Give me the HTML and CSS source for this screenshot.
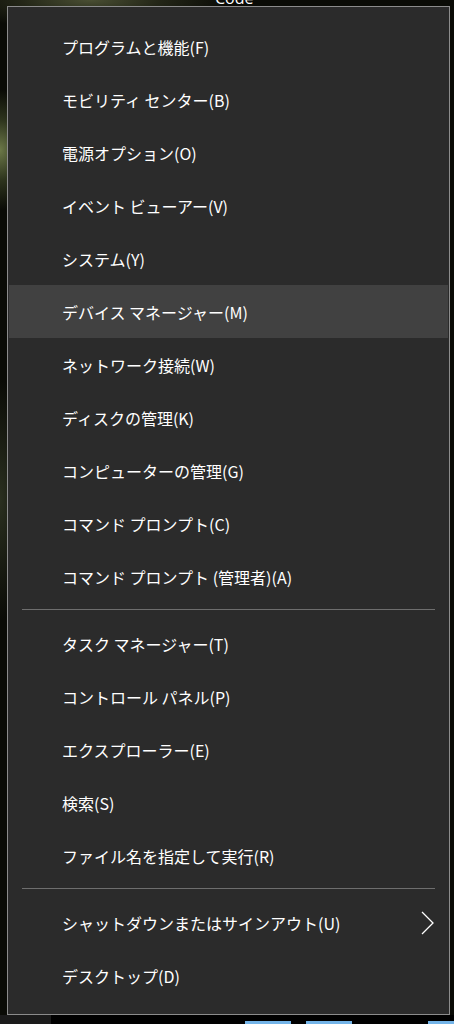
FILE: index.html
```html
<!DOCTYPE html>
<html lang="ja">
<head>
<meta charset="utf-8">
<title>Win+X menu</title>
<link rel="stylesheet" href="styles.css">
</head>
<body>
<div class="screen">
  <div class="top-strip"><span class="desk-label">Code</span></div>
  <div class="middle">
    <div class="menu">
      <div class="item">プログラムと機能(F)</div>
      <div class="item">モビリティ センター(B)</div>
      <div class="item">電源オプション(O)</div>
      <div class="item">イベント ビューアー(V)</div>
      <div class="item">システム(Y)</div>
      <div class="item hover">デバイス マネージャー(M)</div>
      <div class="item">ネットワーク接続(W)</div>
      <div class="item">ディスクの管理(K)</div>
      <div class="item">コンピューターの管理(G)</div>
      <div class="item">コマンド プロンプト(C)</div>
      <div class="item">コマンド プロンプト (管理者)(A)</div>
      <div class="sep"></div>
      <div class="item">タスク マネージャー(T)</div>
      <div class="item">コントロール パネル(P)</div>
      <div class="item">エクスプローラー(E)</div>
      <div class="item">検索(S)</div>
      <div class="item">ファイル名を指定して実行(R)</div>
      <div class="sep"></div>
      <div class="item sub"><span>シャットダウンまたはサインアウト(U)</span>
        <svg class="chev" width="13" height="24" viewBox="0 0 13 24"><path d="M1 1 L12 12 L1 23" fill="none" stroke="#ffffff" stroke-width="1.3"/></svg>
      </div>
      <div class="item">デスクトップ(D)</div>
    </div>
  </div>
  <div class="taskbar">
    <div class="tb-left"></div>
    <div class="tb-btn b1"></div>
    <div class="tb-btn b2"></div>
    <div class="tb-btn b3"></div>
  </div>
</div>
</body>
</html>
```

FILE: styles.css
```css
html, body {
  margin: 0;
  padding: 0;
}
body {
  width: 454px;
  height: 1024px;
  overflow: hidden;
  background-color: #0a0b06;
  background-image:
    radial-gradient(ellipse 40px 60px at 0px 150px, #6c7848 0%, rgba(70,80,45,0.6) 50%, rgba(0,0,0,0) 100%),
    radial-gradient(ellipse 140px 30px at 90px 0px, #4a4f33 0%, rgba(60,64,40,0.5) 50%, rgba(0,0,0,0) 100%),
    radial-gradient(ellipse 30px 120px at 0px 500px, #2b3020 0%, rgba(0,0,0,0) 100%);
  font-family: "Noto Sans CJK JP", "Noto Sans", sans-serif;
}
.screen {
  display: flex;
  flex-direction: column;
}
.top-strip {
  height: 6px;
  overflow: hidden;
  padding-left: 215px;
}
.desk-label {
  display: block;
  margin-top: -10px;
  font-family: "Open Sans", "Noto Sans", sans-serif;
  font-size: 16px;
  line-height: 16px;
  color: #ffffff;
}
.middle {
  display: flex;
  padding-left: 7px;
}
.menu {
  width: 441px;
  height: 1007px;
  box-sizing: content-box;
  border: 1px solid #8c8c8c;
  background: #2b2b2b;
  padding: 13px 0 0 0;
  box-sizing: border-box;
  height: 1009px;
  width: 443px;
  display: flex;
  flex-direction: column;
}
.item {
  height: 53px;
  flex: none;
  display: flex;
  align-items: center;
  margin: 0 1px;
  padding-left: 53px;
  padding-right: 14px;
  color: #ffffff;
  font-size: 16px;
  white-space: nowrap;
}
.item.hover {
  background: #414141;
}
.item.sub {
  justify-content: space-between;
}
.chev {
  display: block;
}
.sep {
  flex: none;
  height: 1px;
  background: #6e6e6e;
  margin: 6px 14px 7px 14px;
}
.taskbar {
  height: 9px;
  display: flex;
  background: #000000;
  position: relative;
}
.tb-left {
  width: 51px;
  height: 9px;
  background: #1b1b1b;
}
.tb-btn {
  height: 3px;
  margin-top: 6px;
  background: #74b4e8;
}
.b1 { width: 46px; margin-left: 194px; }
.b2 { width: 46px; margin-left: 15px; }
.b3 { width: 26px; margin-left: 76px; }
```
